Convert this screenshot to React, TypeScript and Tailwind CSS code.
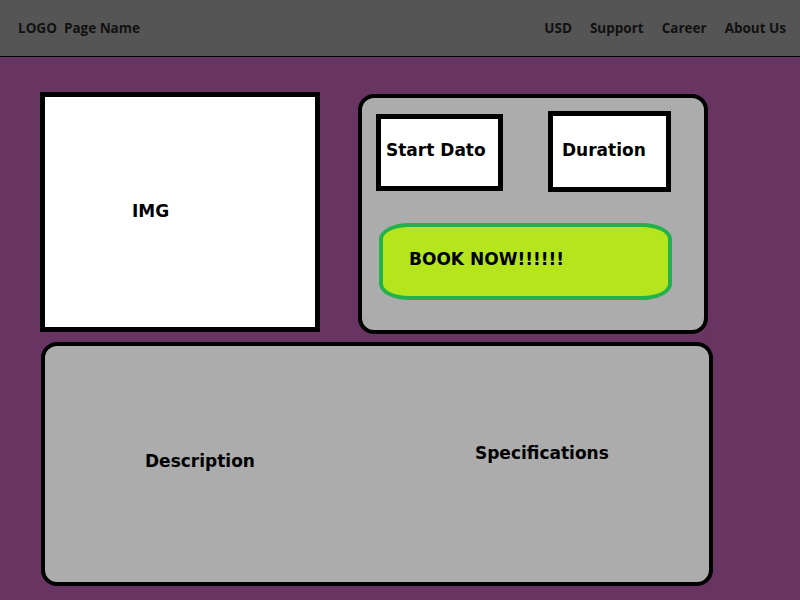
import React from "react";

export default function App() {
  const label = "font-['DejaVu_Sans',sans-serif] font-bold text-[17px] text-black leading-none";
  return (
    <div className="w-[800px] h-[600px] bg-[#683462] overflow-hidden flex flex-col">
      <header className="h-[57px] bg-[#555555] border-b border-black flex items-center justify-between pl-[18px] pr-[14px] font-['Open_Sans',sans-serif] font-bold text-[13.5px] text-[#111111] shrink-0">
        <span className="whitespace-pre">LOGO  Page Name</span>
        <nav className="flex gap-[18px]">
          <span>USD</span>
          <span>Support</span>
          <span>Career</span>
          <span>About Us</span>
        </nav>
      </header>

      <div className="flex items-start pl-[40px] pt-[35px]">
        <div className="w-[280px] h-[240px] bg-white border-[5px] border-black flex items-center">
          <span className={`${label} ml-[87px] -mt-[2px]`}>IMG</span>
        </div>

        <div className="ml-[38px] mt-[2px] w-[350px] h-[240px] bg-[#acacac] border-4 border-black rounded-[16px] flex flex-col pl-[14px] pt-[13px]">
          <div className="flex items-start">
            <div className="mt-[3px] w-[127px] h-[77px] bg-white border-[5px] border-black flex items-center pl-[5px]">
              <span className={`${label} -mt-[4px]`}>Start Dato</span>
            </div>
            <div className="ml-[45px] w-[123px] h-[81px] bg-white border-[5px] border-black flex items-center pl-[9px]">
              <span className={`${label} -mt-[2px]`}>Duration</span>
            </div>
          </div>
          <div className="mt-[31px] ml-[3px] w-[293px] h-[77px] bg-[#b5e61d] border-4 border-[#22b14c] rounded-[30px/16px] flex items-center pl-[26px]">
            <span className={`${label} -mt-[4px]`}>BOOK NOW!!!!!!</span>
          </div>
        </div>
      </div>

      <div className="ml-[41px] mt-[8px] w-[672px] h-[244px] bg-[#acacac] border-4 border-black rounded-[16px] flex items-start">
        <span className={`${label} ml-[100px] mt-[107px]`}>Description</span>
        <span className={`${label} ml-[220px] mt-[99px]`}>Specifications</span>
      </div>
    </div>
  );
}
